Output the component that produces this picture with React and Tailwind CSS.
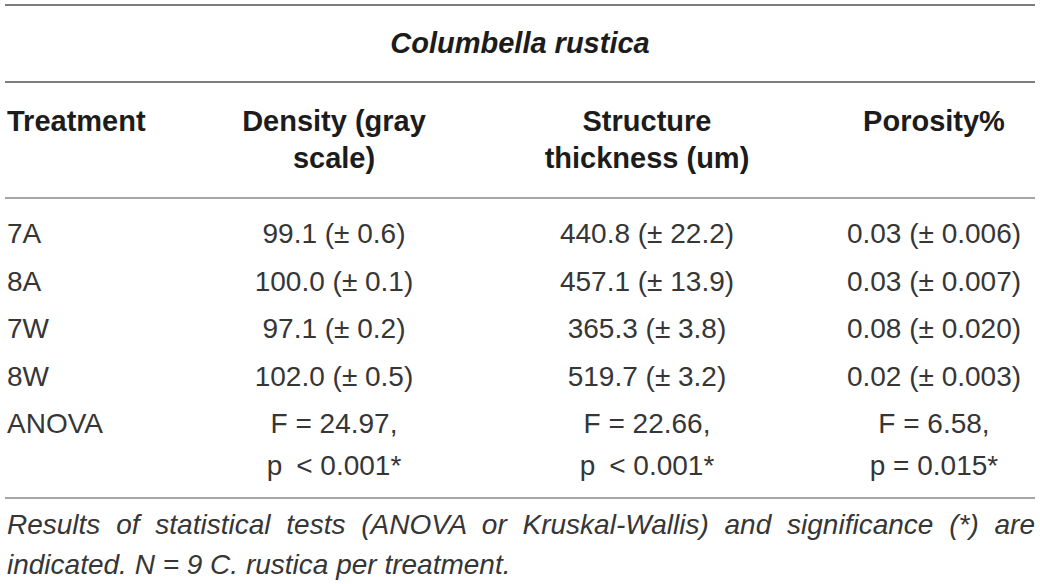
import React from "react";

const rows = [
  ["7A", "99.1 (± 0.6)", "440.8 (± 22.2)", "0.03 (± 0.006)"],
  ["8A", "100.0 (± 0.1)", "457.1 (± 13.9)", "0.03 (± 0.007)"],
  ["7W", "97.1 (± 0.2)", "365.3 (± 3.8)", "0.08 (± 0.020)"],
  ["8W", "102.0 (± 0.5)", "519.7 (± 3.2)", "0.02 (± 0.003)"],
];

const anova = [
  ["F = 24.97,", "p\u2002< 0.001*"],
  ["F = 22.66,", "p\u2002< 0.001*"],
  ["F = 6.58,", "p = 0.015*"],
];

const grid = "grid grid-cols-[202px_254px_372px_202px]";

export default function App() {
  return (
    <div
      className="w-[1040px] h-[584px] bg-white px-[5px] pt-[4px] text-[28px] leading-[37px] text-[#363636]"
      style={{ fontFamily: '"Liberation Sans", Arial, sans-serif' }}
    >
      <div className="h-[2px] bg-[#7d7d7d]" />
      <div className="h-[75px] flex items-center justify-center font-bold italic text-[29px] text-[#1c1c1c]">
        Columbella rustica
      </div>
      <div className="h-[2px] bg-[#7d7d7d]" />
      <div className={`${grid} pt-[20px] pb-[20px] font-bold text-[29px] text-[#1c1c1c]`}>
        <div className="pl-[2px]">Treatment</div>
        <div className="text-center">
          Density (gray
          <br />
          scale)
        </div>
        <div className="text-center">
          Structure
          <br />
          thickness (um)
        </div>
        <div className="text-center">Porosity%</div>
      </div>
      <div className="h-[2px] bg-[#a6a6a6]" />
      <div className="pt-[16px]">
        {rows.map((r) => (
          <div key={r[0]} className={`${grid} pb-[10.5px]`}>
            <div className="pl-[2px]">{r[0]}</div>
            <div className="text-center">{r[1]}</div>
            <div className="text-center">{r[2]}</div>
            <div className="text-center">{r[3]}</div>
          </div>
        ))}
        <div className={`${grid} pb-[13px]`}>
          <div className="pl-[2px]">ANOVA</div>
          {anova.map((a, i) => (
            <div key={i} className="text-center">
              <div>{a[0]}</div>
              <div className="pt-[5px]">{a[1]}</div>
            </div>
          ))}
        </div>
      </div>
      <div className="h-[2px] bg-[#a6a6a6]" />
      <p className="pt-[6px] pl-[2px] italic text-justify leading-[40px] text-[#363636]">
        Results of statistical tests (ANOVA or Kruskal-Wallis) and significance (*) are indicated. N = 9 C. rustica per
        treatment.
      </p>
    </div>
  );
}
